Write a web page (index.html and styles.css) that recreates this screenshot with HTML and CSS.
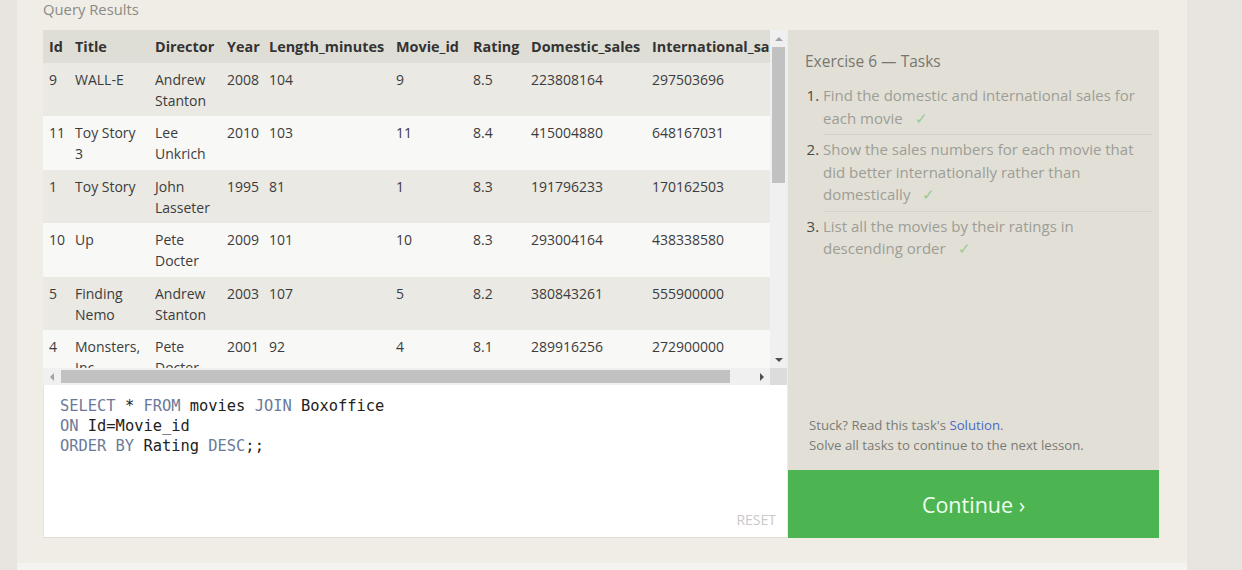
FILE: index.html
```html
<!DOCTYPE html>
<html lang="en">
<head>
<meta charset="utf-8">
<title>SQL Lesson — Exercise 6</title>
<link rel="stylesheet" href="styles.css">
</head>
<body>
<div class="page">
  <main class="card">
    <div class="label">Query Results</div>
    <div class="workspace">
      <section class="left">
        <div class="results">
          <div class="viewport">
            <table class="grid">
              <colgroup>
                <col class="c-id"><col class="c-title"><col class="c-dir"><col class="c-year"><col class="c-len"><col class="c-mid"><col class="c-rat"><col class="c-dom"><col class="c-int">
              </colgroup>
              <thead>
                <tr><th>Id</th><th>Title</th><th>Director</th><th>Year</th><th>Length_minutes</th><th>Movie_id</th><th>Rating</th><th>Domestic_sales</th><th>International_sales</th></tr>
              </thead>
              <tbody>
                <tr><td>9</td><td>WALL-E</td><td>Andrew Stanton</td><td>2008</td><td>104</td><td>9</td><td>8.5</td><td>223808164</td><td>297503696</td></tr>
                <tr><td>11</td><td>Toy Story 3</td><td>Lee Unkrich</td><td>2010</td><td>103</td><td>11</td><td>8.4</td><td>415004880</td><td>648167031</td></tr>
                <tr><td>1</td><td>Toy Story</td><td>John Lasseter</td><td>1995</td><td>81</td><td>1</td><td>8.3</td><td>191796233</td><td>170162503</td></tr>
                <tr><td>10</td><td>Up</td><td>Pete Docter</td><td>2009</td><td>101</td><td>10</td><td>8.3</td><td>293004164</td><td>438338580</td></tr>
                <tr><td>5</td><td>Finding Nemo</td><td>Andrew Stanton</td><td>2003</td><td>107</td><td>5</td><td>8.2</td><td>380843261</td><td>555900000</td></tr>
                <tr><td>4</td><td>Monsters, Inc.</td><td>Pete Docter</td><td>2001</td><td>92</td><td>4</td><td>8.1</td><td>289916256</td><td>272900000</td></tr>
                <tr><td>2</td><td>A Bug's Life</td><td>John Lasseter</td><td>1998</td><td>95</td><td>2</td><td>7.2</td><td>162798565</td><td>200600000</td></tr>
              </tbody>
            </table>
          </div>
          <div class="vbar">
            <span class="arrow up"></span>
            <div class="vtrack"><div class="vthumb"></div></div>
            <span class="arrow down"></span>
          </div>
          <div class="hbar">
            <span class="arrow left"></span>
            <div class="htrack"><div class="hthumb"></div></div>
            <span class="arrow right"></span>
          </div>
          <div class="corner"></div>
        </div>
        <div class="editor">
<pre class="code"><span class="kw">SELECT</span> * <span class="kw">FROM</span> movies <span class="kw">JOIN</span> Boxoffice
<span class="kw">ON</span> Id=Movie_id
<span class="kw">ORDER BY</span> Rating <span class="kw">DESC</span>;;</pre>
          <span class="reset">RESET</span>
        </div>
      </section>
      <aside class="tasks">
        <div class="tasks-body">
          <h2 class="tasks-title">Exercise 6 — Tasks</h2>
          <ol class="task-list">
            <li>Find the domestic and international sales for each movie <span class="check">✓</span></li>
            <li>Show the sales numbers for each movie that did better internationally rather than domestically <span class="check">✓</span></li>
            <li>List all the movies by their ratings in descending order <span class="check">✓</span></li>
          </ol>
        </div>
        <div class="hint">
          <div>Stuck? Read this task's <a class="solution" href="#">Solution</a>.</div>
          <div>Solve all tasks to continue to the next lesson.</div>
        </div>
        <button class="continue" type="button">Continue ›</button>
      </aside>
    </div>
  </main>
</div>
</body>
</html>
```

FILE: styles.css
```css
* { box-sizing: border-box; }

html, body {
  margin: 0;
  height: 100%;
}

body {
  background: #e8e4e0;
  font-family: "Open Sans", "Noto Sans", sans-serif;
  color: #333;
  overflow: hidden;
}

.page {
  height: 570px;
  padding-left: 17px;
  display: flex;
  flex-direction: column;
}

.card {
  width: 1170px;
  background: #efede6;
  padding: 0 28px 25px 26px;
  border-bottom: 7px solid #f5f3ef;
}

.label {
  font-size: 14.8px;
  line-height: 20px;
  color: #8a8a86;
  margin-top: -1px;
  margin-bottom: 11px;
}

.workspace {
  display: grid;
  grid-template-columns: 744px 371px;
  gap: 0 1px;
}

/* ---------- results ---------- */
.results {
  display: grid;
  grid-template-columns: 727px 17px;
  grid-template-rows: 338px 17px;
}

.viewport {
  overflow: hidden;
  background: #f8f8f7;
}

.grid {
  border-collapse: collapse;
  table-layout: fixed;
  width: 743px;
  font-size: 14px;
}

.c-id { width: 26px; }
.c-title { width: 80px; }
.c-dir { width: 72px; }
.c-year { width: 42px; }
.c-len { width: 127px; }
.c-mid { width: 77px; }
.c-rat { width: 58px; }
.c-dom { width: 121px; }
.c-int { width: 140px; }

.grid th,
.grid td {
  text-align: left;
  vertical-align: top;
  padding: 6px 6px 5.4px 6px;
  line-height: 21px;
  overflow: hidden;
}

.grid th {
  background: #dfded6;
  font-weight: 700;
  font-size: 14.4px;
  padding-bottom: 6px;
  color: #333;
  white-space: nowrap;
}

.grid td {
  color: #3c3c3c;
}

.grid tbody tr:nth-child(odd) td { background: #eae9e3; }
.grid tbody tr:nth-child(even) td { background: #f8f8f7; }

/* scrollbars */
.vbar {
  background: #f0f0f0;
  display: flex;
  flex-direction: column;
  align-items: center;
}

.vtrack {
  flex: 1;
  width: 100%;
  padding: 0 2px;
}

.vthumb {
  height: 136px;
  background: #c1c1c1;
}

.hbar {
  background: #f0f0f0;
  display: flex;
  align-items: center;
}

.htrack {
  flex: 1;
  height: 100%;
  padding: 2px 0;
}

.hthumb {
  height: 100%;
  width: 669px;
  margin-left: 1px;
  background: #c1c1c1;
}

.corner { background: #dcdcdc; }

.arrow {
  width: 17px;
  height: 17px;
  flex: none;
  display: flex;
  align-items: center;
  justify-content: center;
}

.arrow::before {
  content: "";
  width: 0;
  height: 0;
  border: 4px solid transparent;
}

.arrow.up::before { border-bottom-color: #a3a3a3; border-top-width: 0; }
.arrow.down::before { border-top-color: #505050; border-bottom-width: 0; }
.arrow.left::before { border-right-color: #a3a3a3; border-left-width: 0; }
.arrow.right::before { border-left-color: #505050; border-right-width: 0; }

/* editor */
.editor {
  height: 153px;
  background: #fff;
  border-left: 1px solid #e6e3da;
  border-bottom: 1px solid #dedbd2;
  display: flex;
  flex-direction: column;
  justify-content: space-between;
  padding: 11px 11px 8px 16px;
}

.code {
  margin: 0;
  font-family: "DejaVu Sans Mono", "Liberation Mono", monospace;
  font-size: 15.4px;
  line-height: 20px;
  color: #222;
}

.kw { color: #6b7a99; }

.reset {
  align-self: flex-end;
  font-size: 14px;
  color: #c9c9c9;
  line-height: 18px;
}

/* tasks */
.tasks {
  display: flex;
  flex-direction: column;
  background: #e2e0d6;
}

.tasks-body {
  flex: 1;
  padding: 19px 7px 0 17px;
}

.tasks-title {
  margin: 0 0 11px;
  font-weight: 400;
  font-size: 15.5px;
  line-height: 24px;
  color: #777770;
}

.task-list {
  margin: 0;
  padding-left: 18px;
  font-size: 15px;
  line-height: 22.5px;
  color: #9d9d97;
}

.task-list li {
  padding: 0 12px 5px 0;
  border-bottom: 1px solid #d5d3c9;
  margin-bottom: 3px;
}

.task-list li:last-child { border-bottom: 0; }

.task-list li::marker { color: #4a4a48; }

.check {
  color: #94cc94;
  margin-left: 8px;
}

.hint {
  padding: 0 10px 15px 21px;
  font-size: 13.2px;
  line-height: 20px;
  color: #7b7b76;
}

.solution {
  color: #4a69c4;
  text-decoration: none;
}

.continue {
  height: 68px;
  border: 0;
  background: #4cb552;
  color: #f0fff0;
  font-family: "Open Sans", "Noto Sans", sans-serif;
  font-size: 21.5px;
  cursor: pointer;
}
```
